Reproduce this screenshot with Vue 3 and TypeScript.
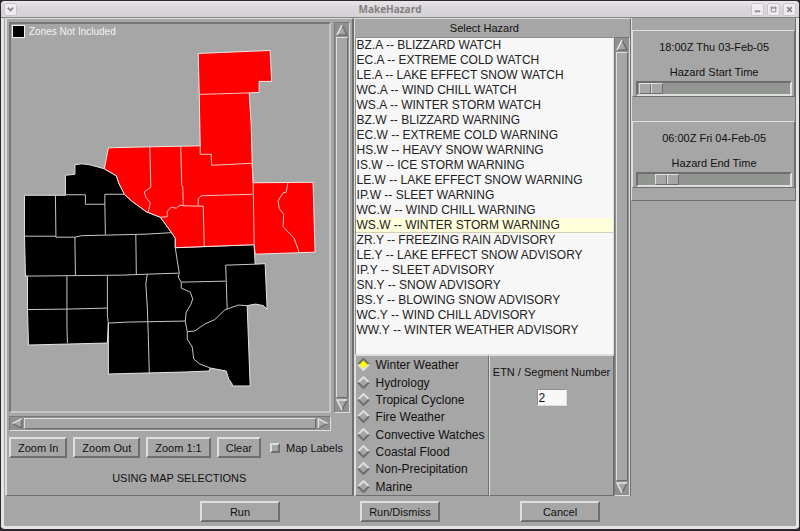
<script setup lang="ts">
import { reactive, ref } from 'vue'

const hazards: string[] = [
  'BZ.A -- BLIZZARD WATCH',
  'EC.A -- EXTREME COLD WATCH',
  'LE.A -- LAKE EFFECT SNOW WATCH',
  'WC.A -- WIND CHILL WATCH',
  'WS.A -- WINTER STORM WATCH',
  'BZ.W -- BLIZZARD WARNING',
  'EC.W -- EXTREME COLD WARNING',
  'HS.W -- HEAVY SNOW WARNING',
  'IS.W -- ICE STORM WARNING',
  'LE.W -- LAKE EFFECT SNOW WARNING',
  'IP.W -- SLEET WARNING',
  'WC.W -- WIND CHILL WARNING',
  'WS.W -- WINTER STORM WARNING',
  'ZR.Y -- FREEZING RAIN ADVISORY',
  'LE.Y -- LAKE EFFECT SNOW ADVISORY',
  'IP.Y -- SLEET ADVISORY',
  'SN.Y -- SNOW ADVISORY',
  'BS.Y -- BLOWING SNOW ADVISORY',
  'WC.Y -- WIND CHILL ADVISORY',
  'WW.Y -- WINTER WEATHER ADVISORY',
]
const selectedHazard = ref('WS.W -- WINTER STORM WARNING')

const categories: string[] = [
  'Winter Weather',
  'Hydrology',
  'Tropical Cyclone',
  'Fire Weather',
  'Convective Watches',
  'Coastal Flood',
  'Non-Precipitation',
  'Marine',
]
const category = ref('Winter Weather')

const mapActions: string[] = ['Zoom In', 'Zoom Out', 'Zoom 1:1', 'Clear']
const mapLabels = ref(false)
const segment = ref('2')

interface TimeScale {
  id: string
  time: string
  label: string
  value: number
}
const times = reactive<TimeScale[]>([
  { id: 'start-time', time: '18:00Z Thu 03-Feb-05', label: 'Hazard Start Time', value: 1 },
  { id: 'end-time', time: '06:00Z Fri 04-Feb-05', label: 'Hazard End Time', value: 17 },
])

// Zone areas, filled first; county lines are stroked over them.
const selectedZones: string[] = [
  'M198.500 52.500L270.500 49.500L272 80.500H259.500V91.500L249.500 92L251.500 123.500L252.500 162L253.500 182L313.500 181.500L315.500 251.500L255.500 253.500L254.500 244L175.500 247V237.500L171.500 231.500L160.500 216.500L146.500 211L131.500 200L124.500 193.500L119 182.500L116.500 175L104.500 168L108.500 147L150 146L200.500 145L199.500 93.500Z',
]
const otherZones: string[] = [
  'M75 164L82 163L90 164L104.500 168L116.500 175L119 182.500L124.500 193.500L131.500 200L146.500 211L160.500 216.500L171.500 231.500L175.500 237.500V247L254.500 244L255.500 263.500L265.500 263L267.500 308.500L263.500 305L256 303.500L247.500 305L250.500 385.500H232.500V383.500L229 378.500L226.500 370.500L210.500 367.500L209.500 370.500L185 371.500L108.500 373.500V322.500L107.500 342.500L28.500 344.500L27.500 308.500V275.500H25.500L24.500 235.500V194.500H65.500V174.500L75 173.500Z',
]
const redLines: string[] = [
  'M199.500 93.500L249.500 92',
  'M200.500 145V153.500H211.500L212 164.500L252 162.500',
  'M150 146L151 186.500L144.500 191L146 196.500L150.500 202L148.500 211',
  'M181 145.500L182 185L183 186L183.500 205',
  'M160.500 216.500L167.500 216V210.500L171.500 206.500L176.500 207.500L180 204.500L183.500 205L203.500 205.500L204.500 245.500',
  'M198.500 205V198L201.500 195L252.500 193.500',
  'M252.500 162L253.500 182L254.500 244',
  'M288.500 181.500L286.500 191.500L283.500 192L278.500 200L279.500 207.500L284 213.500L283.500 226L294.500 237.500L299.500 251.500',
]
const blackLines: string[] = [
  'M65.500 194H85.500V203.500H105V193.500H124.500',
  'M55.500 194L56 236',
  'M105 203.500L105.500 234',
  'M24.500 235.500H55.500L56 236.500H75L81.500 235L145 233.500L171.500 232',
  'M75 236.500L75.500 275',
  'M136 234L136.500 274',
  'M25.500 275.500L121.500 274.500L162.500 273L179 272.500',
  'M67 275.500V325L67.500 342.500',
  'M27.500 309L67 308.500L107.500 307.500',
  'M107.500 275.500V315L108.500 322.500L128.500 321.500L185.500 320.500',
  'M147.500 273.500L146 283L147.500 306.500L148.500 335L149.500 373',
  'M175.500 247L177.500 260L179.500 272.500L178.500 276.500L181.500 281.500V287.500L190.500 291.500L193 298.500L191 304L186.500 311.500L185.500 320.500L187.500 331V338.500L192.500 346.500L194 358.500L200 363.500L210.500 367.500',
  'M181.500 281.500L226 280.500',
  'M255.500 263.500L226 264.500L227.500 308.500',
  'M247.500 305L238.500 304.500L227.500 308.500L225 309.500L215 319L205 323.500L195 330.500L187.500 331',
]
</script>

<template>
  <div class="window">
    <header class="titlebar">
      <button class="wm" type="button" aria-label="Window menu">
        <svg viewBox="0 0 12 12"><path d="M3 4l3 3 3-3" /></svg>
      </button>
      <h1>MakeHazard</h1>
      <div class="wm-group">
        <button class="wm" type="button" aria-label="Minimize">
          <svg viewBox="0 0 12 12"><path d="M3 8h6" /></svg>
        </button>
        <button class="wm" type="button" aria-label="Maximize">
          <svg viewBox="0 0 12 12"><path class="thin" d="M3.500 3v5.500h5V3M3 3.500h6M3 4.500h6" /></svg>
        </button>
        <button class="wm" type="button" aria-label="Close">
          <svg viewBox="0 0 12 12"><path d="M3.500 3.500l5 5M8.500 3.500l-5 5" /></svg>
        </button>
      </div>
    </header>

    <main class="body">
      <section class="panel map-panel">
        <div class="map-grid">
          <div class="map">
            <svg class="zones" viewBox="11 23 318 386" preserveAspectRatio="xMinYMin meet" role="img" aria-label="Zone map">
              <path v-for="d in otherZones" :key="d" class="zone-out" :d="d" />
              <path v-for="d in selectedZones" :key="d" class="zone-in" :d="d" />
              <path v-for="d in redLines" :key="d" class="line-in" :d="d" />
              <path v-for="d in blackLines" :key="d" class="line-out" :d="d" />
            </svg>
            <div class="legend"><span class="swatch"></span>Zones Not Included</div>
          </div>
          <div class="scroll vertical">
            <button type="button" aria-label="Scroll map up">
              <svg viewBox="0 0 12 12"><path d="M6 1l5 10H1z" /><path class="shade" d="M6 1l5 10H1" /><path class="lit" d="M1 11L6 1" /></svg>
            </button>
            <div class="thumb"></div>
            <button type="button" aria-label="Scroll map down">
              <svg viewBox="0 0 12 12"><path d="M1 1h10L6 11z" /><path class="shade" d="M11 1L6 11" /><path class="lit" d="M11 1H1l5 10" /></svg>
            </button>
          </div>
          <div class="scroll horizontal">
            <button type="button" aria-label="Scroll map left">
              <svg viewBox="0 0 12 12"><path d="M11 1v10L1 6z" /><path class="shade" d="M11 1v10L1 6" /><path class="lit" d="M1 6l10-5" /></svg>
            </button>
            <div class="thumb"></div>
            <button type="button" aria-label="Scroll map right">
              <svg viewBox="0 0 12 12"><path d="M1 1v10l10-5z" /><path class="shade" d="M1 11l10-5" /><path class="lit" d="M1 11V1l10 5" /></svg>
            </button>
          </div>
        </div>
        <div class="map-actions">
          <button v-for="a in mapActions" :key="a" class="btn" type="button">{{ a }}</button>
          <label class="check"><input v-model="mapLabels" type="checkbox" />Map Labels</label>
        </div>
        <p class="status">USING MAP SELECTIONS</p>
      </section>

      <section class="panel hazard-panel">
        <div class="hazard-main">
          <label class="heading" for="hazard-list">Select Hazard</label>
          <select id="hazard-list" v-model="selectedHazard" class="list" size="20">
            <option v-for="h in hazards" :key="h" :value="h">{{ h }}</option>
          </select>
          <div class="details">
            <div class="categories" role="radiogroup" aria-label="Hazard category">
              <label v-for="c in categories" :key="c" class="radio">
                <input v-model="category" type="radio" name="category" :value="c" />
                <svg class="diamond" viewBox="0 0 13 13" aria-hidden="true">
                  <path class="face" d="M6.500 1.500l5 5-5 5-5-5z" />
                  <path class="top" d="M1 6.500l5.500-5.500L12 6.500" />
                  <path class="bottom" d="M1 6.500l5.500 5.500L12 6.500" />
                </svg>
                {{ c }}
              </label>
            </div>
            <div class="segment">
              <label for="segment">ETN / Segment Number</label>
              <input id="segment" v-model="segment" type="text" />
            </div>
          </div>
        </div>
        <div class="scroll vertical list-scroll">
          <button type="button" aria-label="Scroll list up">
            <svg viewBox="0 0 12 12"><path d="M6 1l5 10H1z" /><path class="shade" d="M6 1l5 10H1" /><path class="lit" d="M1 11L6 1" /></svg>
          </button>
          <div class="thumb"></div>
          <button type="button" aria-label="Scroll list down">
            <svg viewBox="0 0 12 12"><path d="M1 1h10L6 11z" /><path class="shade" d="M11 1L6 11" /><path class="lit" d="M11 1H1l5 10" /></svg>
          </button>
        </div>
      </section>

      <section class="panel time-panel">
        <div v-for="t in times" :key="t.id" class="time">
          <output :for="t.id">{{ t.time }}</output>
          <label :for="t.id">{{ t.label }}</label>
          <input :id="t.id" v-model.number="t.value" type="range" min="0" max="130" />
        </div>
      </section>
    </main>

    <footer class="footer">
      <button class="btn" type="button">Run</button>
      <button class="btn" type="button">Run/Dismiss</button>
      <button class="btn" type="button">Cancel</button>
    </footer>
  </div>
</template>

<style>
body {
  background: #2c282c;
}
</style>

<style scoped>
.window {
  --face: #a6a6a6;
  --lit: #dcdfdc;
  --dark: #6e6e6e;
  box-sizing: border-box;
  min-height: 100vh;
  display: flex;
  flex-direction: column;
  background: var(--face);
  border: solid #2c282c;
  border-width: 1px 1px 2px;
  border-radius: 5px;
  box-shadow: inset 3px 0 #e6e3e6, inset -3px 0 #e6e3e6, inset 0 -3px #e6e3e6;
  color: #111;
  font: 11px/14px "Liberation Sans", Arial, sans-serif;
}
.window * {
  box-sizing: border-box;
}
button,
input,
select {
  font: inherit;
  color: inherit;
  margin: 0;
}

.titlebar {
  height: 17px;
  padding: 0 3px;
  display: flex;
  align-items: center;
  justify-content: space-between;
  background: linear-gradient(#e8e6e8, #dad7da 40%, #d6d3d6);
  border-bottom: 1px solid #858585;
  border-radius: 4px 4px 0 0;
}
.titlebar h1 {
  margin: 0;
  padding-left: 12px;
  color: #838083;
  font: bold 10px/16px "Open Sans", sans-serif;
}
.wm-group {
  display: flex;
  gap: 3px;
}
.wm {
  width: 13px;
  height: 13px;
  padding: 0;
  display: flex;
  background: #eeecee;
  border: 1px solid #f8f8f8;
  border-radius: 2px;
  outline: 1px solid #cac7ca;
  outline-offset: -1px;
}
.wm svg {
  width: 100%;
  fill: none;
  stroke: #8c898c;
  stroke-width: 2;
}
.wm .thin {
  stroke-width: 1;
}

.body {
  flex: 1;
  display: grid;
  grid-template-columns: minmax(0, 349fr) minmax(0, 278fr) minmax(0, 165fr);
  padding: 0 3px 0 4px;
}
.panel {
  border: 1px solid;
  border-color: var(--lit) var(--dark) var(--dark) var(--lit);
}
.map-panel {
  display: flex;
  flex-direction: column;
  padding: 3px 2px 0;
  border-width: 1px 2px 1px;
}
.map-grid {
  flex: 1;
  display: grid;
  grid-template-columns: 1fr 16px;
  grid-template-rows: 1fr 15px;
  gap: 3px;
}
.map {
  position: relative;
  min-height: 390px;
  border: 2px solid;
  border-color: #777 #c6c6c6 #c6c6c6 #777;
}
.zones {
  position: absolute;
  inset: 0;
  width: 100%;
  height: 100%;
}
.zones path {
  fill: none;
  stroke-width: 1;
}
.zones .zone-out {
  fill: #000;
  stroke: #e4e4e4;
}
.zones .zone-in {
  fill: #f00;
  stroke: #f0e8e8;
}
.zones .line-in {
  stroke: #ffc4c4;
}
.zones .line-out {
  stroke: #c8c8c8;
}
.legend {
  position: relative;
  display: flex;
  align-items: center;
  gap: 4px;
  padding: 1px;
  color: #f2f2f2;
  font-size: 10px;
  line-height: 11px;
}
.swatch {
  width: 13px;
  height: 13px;
  background: #000;
  border: 1px solid #f2f2f2;
}

.scroll {
  display: flex;
  border: 1px solid;
  border-color: #777 var(--lit) var(--lit) #777;
  padding: 1px;
  background: #8f918f;
}
.scroll.vertical {
  flex-direction: column;
}
.scroll button {
  flex: none;
  width: 12px;
  height: 12px;
  padding: 0;
  display: flex;
  border: 0;
  background: none;
}
.scroll.horizontal button {
  height: 11px;
}
.scroll svg {
  width: 100%;
  height: 100%;
}
.scroll path {
  fill: var(--face);
  stroke-width: 1.5;
}
.scroll .lit {
  fill: none;
  stroke: #e4e7e4;
}
.scroll .shade {
  fill: none;
  stroke: #6e6e6e;
}
.thumb {
  flex: 1;
  margin: 1px 0;
  background: var(--face);
  border: 1px solid;
  border-color: var(--lit) var(--dark) var(--dark) var(--lit);
}
.horizontal .thumb {
  margin: 0 1px;
}

.btn {
  height: 21px;
  padding: 0 7px;
  background: var(--face);
  border: 2px solid;
  border-color: var(--lit) var(--dark) var(--dark) var(--lit);
  white-space: nowrap;
}
.map-actions {
  display: flex;
  align-items: center;
  gap: 6px;
  padding-top: 6px;
}
.check {
  display: flex;
  align-items: center;
  gap: 6px;
  margin-left: 3px;
  white-space: nowrap;
}
.check input {
  appearance: none;
  width: 10px;
  height: 10px;
  border: 2px solid;
  border-color: var(--lit) var(--dark) var(--dark) var(--lit);
}
.check input:checked {
  background: #ff0;
}
.status {
  margin: 0;
  padding: 13px 0 10px;
  text-align: center;
}

.hazard-panel {
  display: flex;
  border-bottom: 0;
}
.hazard-main {
  flex: 1;
  min-width: 0;
  display: flex;
  flex-direction: column;
}
.heading {
  padding: 2px 0;
  text-align: center;
}
.list {
  appearance: none;
  width: 100%;
  height: 318px;
  padding: 0;
  overflow: hidden;
  background: #f7f7f7;
  border: 1px solid;
  border-color: #8a918a var(--lit) var(--lit) #8a918a;
  border-radius: 0;
  outline: 0;
  font-size: 12px;
}
.list option {
  height: 15px;
  min-height: 15px;
  padding: 0 1px;
  line-height: 14px;
  color: #222;
}
.list option:checked {
  background: #ffffdc;
  border: solid #d4d0b4;
  border-width: 0 0 1px;
  color: #222;
}
.details {
  flex: 1;
  display: flex;
}
.categories,
.segment {
  border: 1px solid;
  border-color: var(--lit) var(--dark) var(--dark) var(--lit);
}
.categories {
  flex: 134 1 0;
  padding-left: 1px;
  font-size: 12px;
}
.radio {
  height: 17px;
  display: flex;
  align-items: center;
  gap: 6px;
  white-space: nowrap;
}
.radio:nth-child(3n + 1) {
  margin-bottom: 1px;
}
.radio input {
  appearance: none;
  position: absolute;
}
.diamond {
  flex: none;
  width: 13px;
  height: 13px;
}
.diamond path {
  fill: none;
  stroke-width: 2;
}
.diamond .face {
  fill: #a6a6a6;
}
.diamond .top {
  stroke: #dcdfdc;
}
.diamond .bottom {
  stroke: #6e6e6e;
}
input:checked + .diamond .face {
  fill: #ff0;
}
input:checked + .diamond .top {
  stroke: #6e6e6e;
}
input:checked + .diamond .bottom {
  stroke: #dcdfdc;
}
.segment {
  flex: 126 1 0;
  display: flex;
  flex-direction: column;
  align-items: center;
  gap: 10px;
  padding-top: 9px;
  white-space: nowrap;
}
.segment input {
  width: 30px;
  height: 17px;
  padding: 0 1px;
  background: #f7f7f7;
  border: 1px solid;
  border-color: #8a918a var(--lit) var(--lit) #8a918a;
  outline: 0;
  font-size: 12px;
}
.list-scroll {
  width: 16px;
  margin-top: 18px;
}

.time-panel {
  align-self: start;
  display: flex;
  flex-direction: column;
  gap: 24px;
  padding: 12px 0;
  border-top: 0;
}
.time {
  display: flex;
  flex-direction: column;
  align-items: center;
  gap: 11px;
  padding: 9px 2px 0 3px;
  border: 1px solid;
  border-color: var(--lit) var(--dark) var(--dark) var(--lit);
}
.time input {
  appearance: none;
  width: 100%;
  height: 15px;
  margin-top: -9px;
  background: #929592;
  border: 2px solid;
  border-color: #6e6e6e var(--lit) var(--lit) #6e6e6e;
  outline: 0;
}
.time input::-webkit-slider-thumb {
  appearance: none;
  box-sizing: border-box;
  width: 24px;
  height: 11px;
  border: 1px solid;
  border-color: #dcdfdc #6e6e6e #6e6e6e #dcdfdc;
  background: linear-gradient(90deg, #a6a6a6 10px, #6e6e6e 10px 11px, #dcdfdc 11px 12px, #a6a6a6 12px);
}

.footer {
  display: flex;
  justify-content: center;
  gap: 80px;
  padding: 5px 0 7px;
}
.footer .btn {
  width: 80px;
}
</style>
